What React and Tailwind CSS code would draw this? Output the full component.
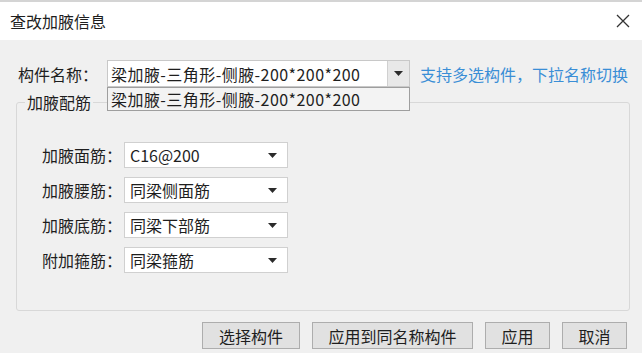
import React from 'react'

function Caret() {
  return (
    <svg width="9" height="5" viewBox="0 0 9 5" className="shrink-0">
      <path d="M0 0h9L4.5 5z" fill="#2b2b2b" />
    </svg>
  )
}

function Select({ value }) {
  return (
    <div className="flex h-[26px] w-[164px] items-center justify-between border border-[#d0d0d0] bg-white pl-[5px] pr-[10px]">
      <span className="leading-none">{value}</span>
      <Caret />
    </div>
  )
}

const rows = [
  ['加腋面筋：', 'C16@200'],
  ['加腋腰筋：', '同梁侧面筋'],
  ['加腋底筋：', '同梁下部筋'],
  ['附加箍筋：', '同梁箍筋'],
]

const buttons = [
  ['选择构件', 'w-[98px]'],
  ['应用到同名称构件', 'w-[161px]'],
  ['应用', 'w-[65px]'],
  ['取消', 'w-[65px]'],
]

export default function App() {
  return (
    <div className="h-[353px] w-[642px] overflow-hidden border-t-2 border-[#d4d4d4] bg-[#f0f0f0] font-['Noto_Sans_CJK_SC',sans-serif] text-[16px] text-[#1e1e1e]">
      <div className="flex h-[38px] items-center justify-between bg-white pl-[10px] pr-[12px]">
        <span className="text-[16px]">查改加腋信息</span>
        <svg width="14" height="14" viewBox="0 0 14 14">
          <path d="M1 1l12 12M13 1L1 13" stroke="#333" strokeWidth="1.3" />
        </svg>
      </div>

      <div className="mt-[20px] flex h-[27px] items-center pl-[18px]">
        <span className="w-[89px]">构件名称：</span>
        <div className="relative flex h-[27px] w-[303px] border border-[#c8c8c8] bg-white">
          <div className="flex flex-1 items-center pl-[3px] leading-none tracking-[0.45px]">梁加腋-三角形-侧腋-200*200*200</div>
          <div className="flex w-[22px] items-center justify-center border-l border-[#d0d0d0] bg-[#e8e8e8]">
            <Caret />
          </div>
          <div className="absolute left-[-1px] top-[26px] z-10 flex h-[24px] w-[303px] items-center border border-[#9e9e9e] bg-[#f3f3f3] pl-[3px] leading-none tracking-[0.45px]">
            梁加腋-三角形-侧腋-200*200*200
          </div>
        </div>
        <span className="ml-[10px] text-[#3a8ed6]">支持多选构件，下拉名称切换</span>
      </div>

      <fieldset className="ml-[16px] mt-[5px] w-[614px] rounded-[3px] border border-[#d8d8d8] pb-[37px] pl-[25px] pt-[30px]">
        <legend className="ml-[-17px] px-[2px] leading-[20px]">加腋配筋</legend>
        <div className="flex flex-col gap-[9px]">
          {rows.map(([label, value]) => (
            <div key={label} className="flex items-center">
              <span className="w-[82px]">{label}</span>
              <Select value={value} />
            </div>
          ))}
        </div>
      </fieldset>

      <div className="mt-[11px] flex justify-end gap-[12px] pr-[15px]">
        {buttons.map(([text, w]) => (
          <div
            key={text}
            className={`flex h-[27px] items-center justify-center border border-[#adadad] bg-[#e1e1e1] ${w}`}
          >
            {text}
          </div>
        ))}
      </div>
    </div>
  )
}
